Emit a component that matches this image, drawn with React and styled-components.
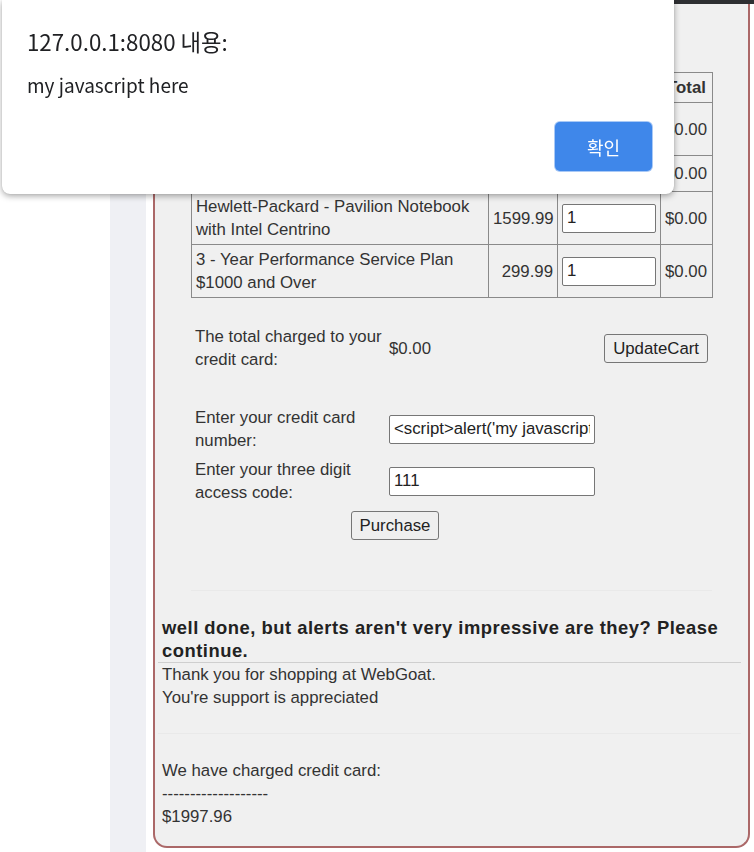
import React from 'react'
import styled, { createGlobalStyle } from 'styled-components'

const GlobalStyle = createGlobalStyle`
  html, body {
    margin: 0;
    padding: 0;
    background: #ffffff;
  }
  body {
    font-family: 'Liberation Sans', Arial, sans-serif;
    overflow: hidden;
  }
`

const cartItems = [
  { name: 'Studio RTA - Laptop/Reading Cart with Tilting Surface - Cherry', price: '69.99' },
  { name: 'Dynex - Traditional Notebook Case', price: '27.99' },
  { name: 'Hewlett-Packard - Pavilion Notebook with Intel Centrino', price: '1599.99' },
  { name: '3 - Year Performance Service Plan $1000 and Over', price: '299.99' },
]

const App = () => {
  return (
    <>
      <GlobalStyle />
      <Page>
        <Gutter />
        <NavStrip />
        <Main>
          <TopBar />
          <PanelWrap>
            <Panel>
              <CartTable>
                <colgroup>
                  <col style={{ width: 297 }} />
                  <col style={{ width: 69 }} />
                  <col style={{ width: 103 }} />
                  <col style={{ width: 52 }} />
                </colgroup>
                <thead>
                  <tr>
                    <th>Shopping Cart Items -- To Buy Now</th>
                    <th>Price</th>
                    <th>Quantity</th>
                    <th>Total</th>
                  </tr>
                </thead>
                <tbody>
                  {cartItems.map((item) => (
                    <tr key={item.name}>
                      <td>{item.name}</td>
                      <td className='price'>{item.price}</td>
                      <td>
                        <QtyInput defaultValue='1' />
                      </td>
                      <td>$0.00</td>
                    </tr>
                  ))}
                </tbody>
              </CartTable>

              <FormGrid>
                <Label>The total charged to your credit card:</Label>
                <Amount>$0.00</Amount>
                <Button $align='end'>UpdateCart</Button>
              </FormGrid>

              <PayTable>
                <Label>Enter your credit card number:</Label>
                <TextInput defaultValue="<script>alert('my javascript here')</script>" />
                <Label>Enter your three digit access code:</Label>
                <TextInput defaultValue='111' />
                <PurchaseCell>
                  <Button>Purchase</Button>
                </PurchaseCell>
              </PayTable>

              <Divider $faint $inset />

              <Message>
                well done, but alerts aren't very impressive are they? Please continue.
              </Message>
              <Divider />
              <Lines>
                <div>Thank you for shopping at WebGoat.</div>
                <div>You're support is appreciated</div>
              </Lines>
              <Divider $faint $space={24} />
              <Lines $top={25}>
                <div>We have charged credit card:</div>
                <div>-------------------</div>
                <div>$1997.96</div>
              </Lines>
            </Panel>
          </PanelWrap>
        </Main>
      </Page>

      <Dialog>
        <DialogTitle>127.0.0.1:8080 내용:</DialogTitle>
        <DialogText>my javascript here</DialogText>
        <DialogFooter>
          <OkButton>확인</OkButton>
        </DialogFooter>
      </Dialog>
    </>
  )
}

export default App

const Page = styled.div`
  display: flex;
  min-height: 852px;
  color: #333;
`

const Gutter = styled.div`
  width: 110px;
  flex-shrink: 0;
  background: #ffffff;
`

const NavStrip = styled.div`
  width: 36px;
  flex-shrink: 0;
  background: #eff0f4;
`

const Main = styled.div`
  flex: 1;
  display: flex;
  flex-direction: column;
`

const TopBar = styled.div`
  height: 4px;
  background: #2e2f32;
`

const PanelWrap = styled.div`
  padding: 0 4px 0 7px;
`

const Panel = styled.div`
  background: #f0f0f0;
  border: 2px solid #ab6868;
  border-top: none;
  border-radius: 0 0 14px 14px;
  padding: 68px 0 18px 0;
  font-size: 16.8px;
  line-height: 23px;
`

const CartTable = styled.table`
  margin-left: 36px;
  width: 521px;
  table-layout: fixed;
  border-collapse: collapse;
  border: 1px solid #333;

  th,
  td {
    border: 1px solid #8a8a8a;
    padding: 3px 4px;
    vertical-align: middle;
  }
  th {
    font-weight: bold;
    text-align: center;
    white-space: nowrap;
    overflow: hidden;
    height: 22px;
  }
  td.price {
    text-align: right;
  }
`

const QtyInput = styled.input`
  box-sizing: border-box;
  width: 94px;
  height: 29px;
  font: inherit;
  color: #222;
  padding: 1px 4px;
  border: 1px solid #767676;
  border-radius: 2px;
  background: #fff;
  display: block;
`

const FormGrid = styled.div`
  display: grid;
  grid-template-columns: 190px 1fr auto;
  align-items: center;
  column-gap: 4px;
  width: 513px;
  margin: 26px 0 0 40px;
`

const Label = styled.div`
  padding: 1px 0;
`

const Amount = styled.div``

const Button = styled.button`
  justify-self: ${(p) => p.$align || 'center'};
  box-sizing: border-box;
  height: 29px;
  padding: 0 8px;
  font: inherit;
  color: #222;
  background: #efefef;
  border: 1px solid #767676;
  border-radius: 3px;
`

const PayTable = styled.div`
  display: grid;
  grid-template-columns: 190px 206px;
  align-items: center;
  column-gap: 4px;
  row-gap: 4px;
  width: 400px;
  margin: 33px 0 0 40px;
`

const TextInput = styled(QtyInput)`
  width: 206px;
  overflow: hidden;
`

const PurchaseCell = styled.div`
  grid-column: 1 / span 2;
  display: flex;
  justify-content: center;
  padding-top: 2px;
`

const Divider = styled.div`
  height: 1px;
  background: ${(p) => (p.$faint ? '#e9e9e9' : '#cfcfcf')};
  margin: ${(p) => (p.$inset ? '50px 36px 0 36px' : `${p.$space || 0}px 7px 0 3px`)};
`

const Message = styled.div`
  margin: 25px 20px 0 7px;
  font-weight: bold;
  font-size: 18.4px;
  letter-spacing: 0.5px;
  color: #222;
`

const Lines = styled.div`
  margin: ${(p) => p.$top || 0}px 0 0 7px;
`

const Dialog = styled.div`
  position: fixed;
  top: 0;
  left: 2px;
  width: 672px;
  height: 194px;
  box-sizing: border-box;
  background: #fff;
  border-radius: 0 0 8px 8px;
  box-shadow: 0 2px 6px rgba(0, 0, 0, 0.35), 0 0 1px rgba(0, 0, 0, 0.2);
  padding: 26px 22px 0 25px;
  font-family: 'Noto Sans CJK KR', 'Noto Sans', sans-serif;
  color: #202124;
  display: flex;
  flex-direction: column;
`

const DialogTitle = styled.div`
  font-size: 22.3px;
  line-height: 30px;
`

const DialogText = styled.div`
  margin-top: 17px;
  font-size: 19px;
  line-height: 24px;
`

const DialogFooter = styled.div`
  display: flex;
  justify-content: flex-end;
  margin-top: 25px;
`

const OkButton = styled.button`
  width: 97px;
  height: 49px;
  background: #3f87ea;
  color: #fff;
  border: none;
  border-radius: 5px;
  box-shadow: 0 0 0 1px #a9c9f6;
  font-family: 'Noto Sans CJK KR', sans-serif;
  font-size: 18px;
`
